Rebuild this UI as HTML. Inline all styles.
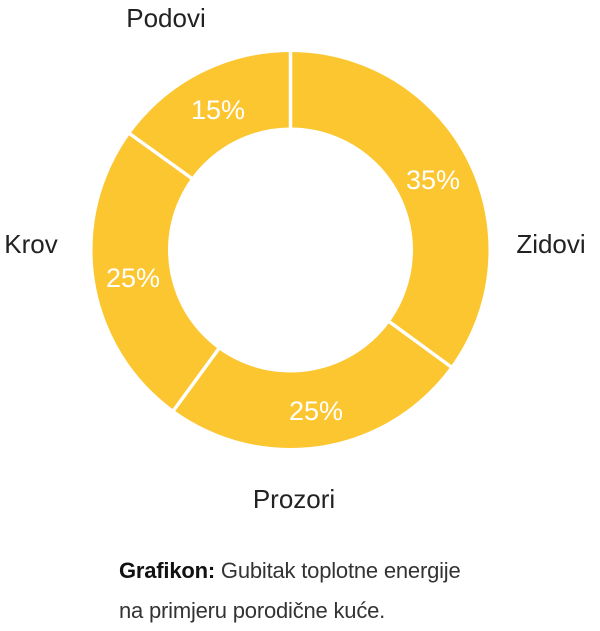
<!DOCTYPE html>
<html><head><meta charset="utf-8"><style>
html,body{margin:0;padding:0;background:#fff;width:600px;height:623px;overflow:hidden}
svg{position:absolute;left:0;top:0}
.cap{position:absolute;left:119px;top:551px;font-family:"Liberation Sans",sans-serif;font-size:22px;color:#333;line-height:40px;white-space:nowrap;letter-spacing:-0.2px}
</style></head><body>
<svg width="600" height="623" viewBox="0 0 600 623">
<circle cx="290.5" cy="250" r="160.25" fill="none" stroke="#fbc630" stroke-width="75.5"/>
<g stroke="#fff" stroke-width="3.5">
<line x1="290.5" y1="45" x2="290.5" y2="130"/>
<line x1="454" y1="369" x2="387" y2="320"/>
<line x1="171" y1="414" x2="220" y2="347"/>
<line x1="126" y1="131" x2="194" y2="180"/>
</g>
<g font-family="Liberation Sans, sans-serif" font-size="27" fill="#fff" text-anchor="middle">
<text x="218" y="119">15%</text>
<text x="433" y="189">35%</text>
<text x="133" y="287">25%</text>
<text x="316" y="420">25%</text>
</g>
<g font-family="Liberation Sans, sans-serif" font-size="26" fill="#222" text-anchor="middle">
<text x="166" y="27">Podovi</text>
<text x="551" y="253">Zidovi</text>
<text x="31" y="253">Krov</text>
<text x="294" y="508">Prozori</text>
</g>
</svg>
<div class="cap"><b style="color:#111">Grafikon:</b> Gubitak toplotne energije<br>na primjeru porodične kuće.</div>
</body></html>
